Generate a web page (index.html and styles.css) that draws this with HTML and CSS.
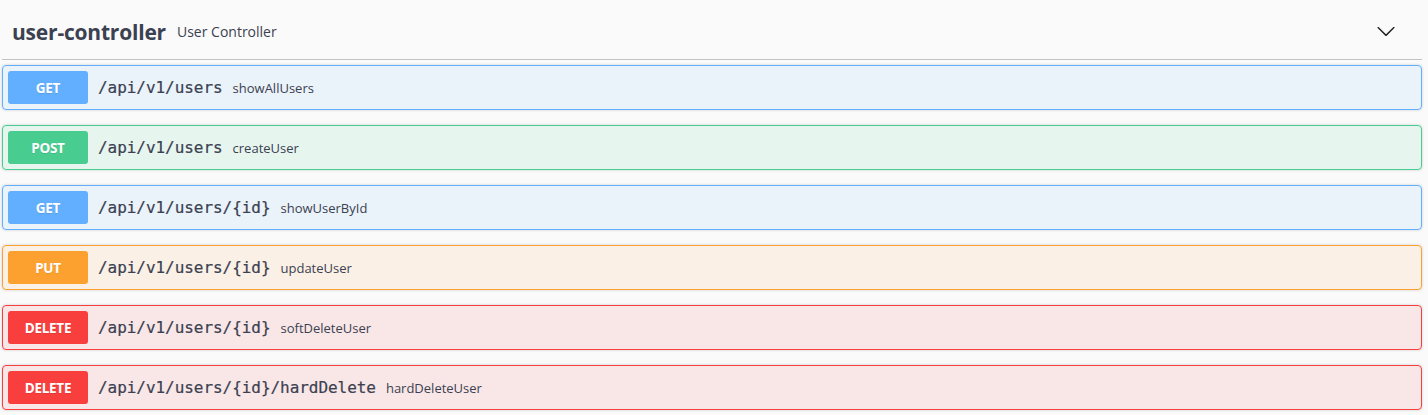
FILE: index.html
```html
<!DOCTYPE html>
<html>
<head>
<meta charset="utf-8">
<link rel="stylesheet" href="styles.css">
</head>
<body>
<div class="wrap">
  <div class="tag">
    <span class="tag-name">user-controller</span>
    <span class="tag-desc">User Controller</span>
    <svg class="arrow" width="20" height="20" viewBox="0 0 20 20"><path d="M17.418 6.109c.272-.268.709-.268.979 0s.271.701 0 .969l-7.908 7.83c-.27.268-.707.268-.979 0l-7.908-7.830c-.27-.268-.27-.701 0-.969.271-.268.709-.268.979 0L10 13.25l7.418-7.141z"/></svg>
  </div>
  <div class="op get"><span class="method">GET</span><span class="path">/api/v1/users</span><span class="desc">showAllUsers</span></div>
  <div class="op post"><span class="method">POST</span><span class="path">/api/v1/users</span><span class="desc">createUser</span></div>
  <div class="op get"><span class="method">GET</span><span class="path">/api/v1/users/{id}</span><span class="desc">showUserById</span></div>
  <div class="op put"><span class="method">PUT</span><span class="path">/api/v1/users/{id}</span><span class="desc">updateUser</span></div>
  <div class="op delete"><span class="method">DELETE</span><span class="path">/api/v1/users/{id}</span><span class="desc">softDeleteUser</span></div>
  <div class="op delete"><span class="method">DELETE</span><span class="path">/api/v1/users/{id}/hardDelete</span><span class="desc">hardDeleteUser</span></div>
</div>
</body>
</html>
```
FILE: styles.css
```css
html, body { margin: 0; padding: 0; background: #fafafa; }
body { font-family: "Open Sans", sans-serif; color: #3b4151; }
.wrap { margin: 0 6px 0 2px; }
.tag {
  display: flex; align-items: center;
  height: 59px; box-sizing: content-box;
  padding: 0 26px 0 10px;
  border-bottom: 1px solid rgba(59,65,81,.3);
  margin-bottom: 5px;
}
.tag-name { font-family: "Open Sans", sans-serif; font-weight: 700; font-size: 21px; letter-spacing: -0.2px; padding-top: 4px; }
.tag-desc { flex: 1; font-size: 14px; padding: 4px 10px 0 11px; }
.arrow { fill: #222; margin-top: 2px; }
.op {
  display: flex; align-items: center;
  border: 1px solid; border-radius: 4px;
  box-shadow: 0 0 3px rgba(0,0,0,.19);
  padding: 5px; margin-bottom: 15px;
}
.method {
  width: 80px; height: 33px; box-sizing: border-box;
  display: flex; align-items: center; justify-content: center;
  border-radius: 3px; color: #fff; font-weight: 700; font-size: 13.5px;
  letter-spacing: -0.3px;
  text-shadow: 0 1px 0 rgba(0,0,0,.1);
}
.path { font-family: "DejaVu Sans Mono", monospace; font-weight: 400; -webkit-text-stroke: 0.2px #3b4151; font-size: 16px; padding: 0 10px 0 10px; letter-spacing: -0.05px; }
.desc { font-size: 13px; }
.get { background: rgba(97,175,254,.1); border-color: #61affe; }
.get .method { background: #61affe; }
.post { background: rgba(73,204,144,.1); border-color: #49cc90; }
.post .method { background: #49cc90; }
.put { background: rgba(252,161,48,.1); border-color: #fca130; }
.put .method { background: #fca130; }
.delete { background: rgba(249,62,62,.1); border-color: #f93e3e; }
.delete .method { background: #f93e3e; }
```
